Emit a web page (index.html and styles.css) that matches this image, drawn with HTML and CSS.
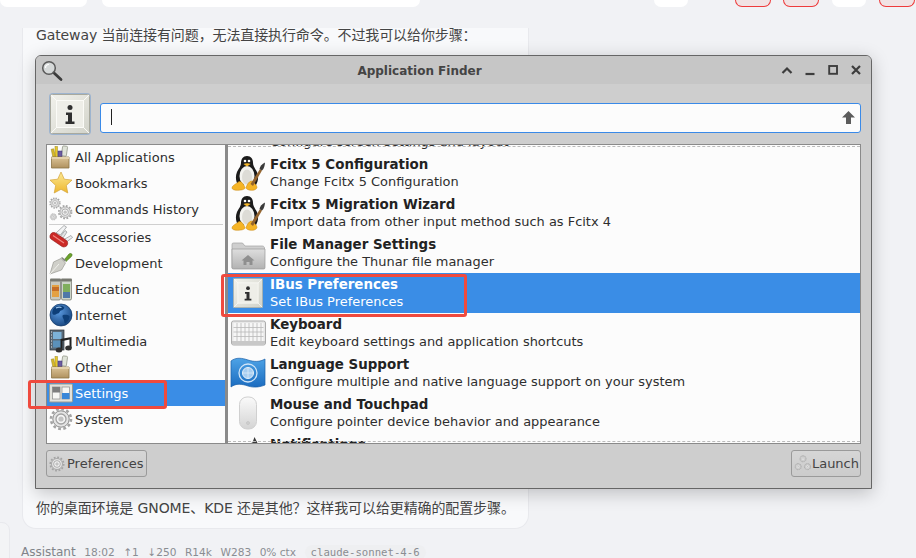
FILE: index.html
```html
<!DOCTYPE html>
<html lang="zh">
<head>
<meta charset="utf-8">
<title>Application Finder</title>
<link rel="stylesheet" href="styles.css">
</head>
<body>
<svg class="defs" width="0" height="0" aria-hidden="true">
  <defs>
    <linearGradient id="gBox" x1="0" y1="0" x2="0" y2="1"><stop offset="0" stop-color="#dcc498"/><stop offset="1" stop-color="#b0925f"/></linearGradient>
    <linearGradient id="gStar" x1="0" y1="0" x2="0" y2="1"><stop offset="0" stop-color="#fce994"/><stop offset="1" stop-color="#eeb72e"/></linearGradient>
    <linearGradient id="gTile" x1="0" y1="0" x2="1" y2="1"><stop offset="0" stop-color="#f2f2ec"/><stop offset="1" stop-color="#d2d3ca"/></linearGradient>
    <linearGradient id="gFolder" x1="0" y1="0" x2="0" y2="1"><stop offset="0" stop-color="#dedede"/><stop offset="1" stop-color="#b2b2b2"/></linearGradient>
    <linearGradient id="gFlag" x1="0" y1="0" x2="0" y2="1"><stop offset="0" stop-color="#4ea3e6"/><stop offset="1" stop-color="#1b6cc0"/></linearGradient>
    <linearGradient id="gMouse" x1="0" y1="0" x2="0" y2="1"><stop offset="0" stop-color="#fafafa"/><stop offset="1" stop-color="#d4d4d4"/></linearGradient>
    <radialGradient id="gGlobe" cx=".4" cy=".35" r=".75"><stop offset="0" stop-color="#5a9ae0"/><stop offset="1" stop-color="#123f78"/></radialGradient>
    <symbol id="i-tile" viewBox="0 0 40 40">
      <rect x=".5" y=".5" width="39" height="39" rx="2" fill="url(#gTile)" stroke="#a8a99e"/>
      <path d="M1 1l6 6M39 1l-6 6M1 39l6-6M39 39l-6-6" stroke="#fafaf6" stroke-width="1"/>
      <rect x="6.500" y="6.500" width="27" height="27" fill="#eeeee8" stroke="#fbfbf7"/>
      <circle cx="20" cy="13.500" r="2.500" fill="#2f2f2f"/>
      <path d="M16 18.500h6v9h2.500V30h-9v-2.500H18v-6.500h-2z" fill="#2f2f2f"/>
    </symbol>
    <symbol id="i-box" viewBox="0 0 24 24">
      <rect x="13" y="1" width="5" height="10" rx="1" fill="#dfe3d8" stroke="#8b8f80" stroke-width=".7" transform="rotate(8 15 6)"/>
      <rect x="6" y="1.500" width="2.500" height="11" fill="#e8c92c" stroke="#9a8520" stroke-width=".5"/>
      <rect x="3" y="4" width="2.500" height="8" fill="#d7b928" stroke="#9a8520" stroke-width=".5" transform="rotate(-12 4 8)"/>
      <rect x="9" y="6" width="4" height="6" fill="#6d5ca0" stroke="#3c3070" stroke-width=".5"/>
      <path d="M2.500 12h17.500v11H2.500z" fill="url(#gBox)" stroke="#8c7345" stroke-width=".8"/>
      <path d="M2.500 12h17.500v2H2.500z" fill="#e5d3ad"/>
    </symbol>
    <symbol id="i-star" viewBox="0 0 24 24">
      <path d="M12 1l3.300 7.200 7.700.9-5.700 5.300 1.500 7.600L12 18.300 5.200 22l1.500-7.600L1 9.100l7.700-.9z" fill="url(#gStar)" stroke="#d3a33a" stroke-width=".7" stroke-linejoin="round"/>
    </symbol>
    <symbol id="i-gear" viewBox="0 0 24 24">
      <circle cx="12" cy="12" r="8.200" fill="#e4e4e4" stroke="#8e8e8e" stroke-width="1"/>
      <circle cx="12" cy="12" r="10" fill="none" stroke="#a4a4a4" stroke-width="2.600" stroke-dasharray="2.800 2.430"/>
      <circle cx="12" cy="12" r="5" fill="#f5f5f5" stroke="#a2a2a2" stroke-width="1.300"/>
      <circle cx="12" cy="12" r="2.600" fill="#c2c2c2"/>
    </symbol>
    <symbol id="i-gears" viewBox="0 0 24 24">
      <g transform="scale(.5)"><use href="#i-gear" width="24" height="24"/></g>
      <g transform="translate(8.500 7.500) scale(.64)"><use href="#i-gear" width="24" height="24"/></g>
      <g transform="translate(.5 16) scale(.32)"><use href="#i-gear" width="24" height="24"/></g>
    </symbol>
    <symbol id="i-knife" viewBox="0 0 24 24">
      <path d="M7 8L15 .5l2.500 1.500-6 8z" fill="#f2f3f4" stroke="#8f9395" stroke-width=".7"/>
      <path d="M11 12l5-6.500 2 1.500-4 6z" fill="#e2e4e6" stroke="#8f9395" stroke-width=".7"/>
      <path d="M14 15l8-4.500 1.500 2-7.500 5.500z" fill="#eceef0" stroke="#8f9395" stroke-width=".7"/>
      <path d="M1.500 9.500c1-2 3-2.500 5-1.500l11 7.500c1.500 1.200 1.500 3.500.5 5-1 1.300-3.500 2-5 1l-11-7.500c-1.300-1-1.300-3-.5-4.500z" fill="#cc2a27" stroke="#8d1614" stroke-width=".6"/>
      <path d="M4 10.500l11 7.500" stroke="#f28a84" stroke-width="1.100" fill="none"/>
    </symbol>
    <symbol id="i-trowel" viewBox="0 0 24 24">
      <path d="M15.500 8.500l4.500-5.500c1-1 2.800-.5 3 .5.200 1-.2 1.500-.8 2.200L17 10.500z" fill="#6da32c" stroke="#42701a" stroke-width=".6"/>
      <path d="M13 8l-1-1 1-1 2 1.500 2 2-1 1-1-.5z" fill="#8a8a84"/>
      <path d="M1 23L4.500 11 12 7.500l4.500 4.500-4 7z" fill="#cfcfc9" stroke="#8d8d86" stroke-width=".6"/>
      <path d="M1 23l9-10" stroke="#f1f1ec" stroke-width="1"/>
    </symbol>
    <symbol id="i-jars" viewBox="0 0 24 24">
      <rect x="1.500" y="3" width="10" height="20" rx="1.500" fill="#c8c9bf" stroke="#6f7068" stroke-width=".7"/>
      <rect x="1" y="1.500" width="11" height="3" rx="1" fill="#777870"/>
      <rect x="3" y="8" width="7" height="12" fill="#e4a142"/>
      <rect x="3" y="10" width="7" height="4" fill="#c56d26"/>
      <rect x="12.500" y="3" width="10" height="20" rx="1.500" fill="#ccd4c8" stroke="#6f7068" stroke-width=".7"/>
      <rect x="12" y="1.500" width="11" height="3" rx="1" fill="#777870"/>
      <rect x="14" y="7" width="7" height="8" fill="#7fae5c"/>
      <rect x="14" y="15" width="7" height="6" fill="#4f79a8"/>
    </symbol>
    <symbol id="i-globe" viewBox="0 0 24 24">
      <circle cx="12" cy="12" r="11" fill="url(#gGlobe)" stroke="#0f3564" stroke-width=".7"/>
      <path d="M6 4c3-1.500 7-1.800 9 0 1 1-1 3-3 3.500-1.500.4-1.200 2.500-3 3-2 .4-3 2-5 1C2.500 10 3.500 6 6 4zM14 12c2-.5 5-.5 6.500 1 .5 2-1.500 6-4 7.500-1.500 0-1-3-2-4.500-.8-1.500-1.500-3.500-.5-4z" fill="#0e3f78"/>
      <path d="M7 5c2-1 4-1 5.500-.5" stroke="#9cc6f0" stroke-width="1.200" fill="none"/>
    </symbol>
    <symbol id="i-media" viewBox="0 0 24 24">
      <rect x="1" y="1" width="14" height="20" fill="#5a6a78" stroke="#2b2f33" stroke-width=".7"/>
      <rect x="4" y="3" width="8.500" height="7" fill="#7cb2d8"/>
      <rect x="4" y="11.500" width="8.500" height="7" fill="#5b91ba"/>
      <path d="M2 3h1M2 6h1M2 9h1M2 12h1M2 15h1M2 18h1" stroke="#e6e6e6" stroke-width="1.100"/>
      <path d="M11.500 10l11-2v11l-2 .5V10.500l-7 1.400V21h-2z" fill="#222"/>
      <ellipse cx="10" cy="21" rx="3.300" ry="2.500" fill="#303030"/>
      <ellipse cx="19.500" cy="19" rx="3.300" ry="2.500" fill="#303030"/>
    </symbol>
    <symbol id="i-settings" viewBox="0 0 24 24">
      <rect x=".5" y="3" width="23" height="18" rx="1" fill="#e2e2dc" stroke="#9a9a92"/>
      <rect x="3.500" y="6" width="7.500" height="12" fill="#f7f7f4" stroke="#8a8a8a" stroke-width=".7"/>
      <rect x="3.500" y="6" width="7.500" height="5.500" fill="#7d7d7d"/>
      <rect x="13" y="6" width="7.500" height="12" fill="#f7f7f4" stroke="#8a8a8a" stroke-width=".7"/>
      <rect x="13" y="12" width="7.500" height="6" fill="#3a87d8"/>
    </symbol>
    <symbol id="i-mag" viewBox="0 0 22 22">
      <path d="M12.500 12.500L20 19.500" stroke="#3c3c3c" stroke-width="2.800" stroke-linecap="round"/>
      <circle cx="8" cy="8" r="6.300" fill="#dfe3e3" fill-opacity=".65" stroke="#5a5a5a" stroke-width="1.500"/>
      <path d="M4.500 8a3.500 3.500 0 0 1 3.500-3.500" fill="none" stroke="#fff" stroke-width="1.200"/>
    </symbol>
    <symbol id="i-tux" viewBox="0 0 36 36">
      <path d="M17 1c4 0 6 3 6 7 0 3 2 5 4 9 2 5 1 10-1 13H8c-2-3-3-8-1-13 2-4 4-6 4-9 0-4 2-7 6-7z" fill="#1b1b1b"/>
      <ellipse cx="17" cy="21" rx="7.500" ry="10" fill="#f3f3ef"/>
      <ellipse cx="17" cy="22" rx="5" ry="7.500" fill="#dddcd6"/>
      <circle cx="15" cy="6" r="1.300" fill="#fff"/><circle cx="19" cy="6" r="1.300" fill="#fff"/>
      <path d="M13.500 9c2-1 5-1 7 0l-3.500 2.500z" fill="#f3b52a"/>
      <path d="M2 33c0-2.500 4-4 7-6.500 3-.5 5 3.500 6 6 .5 2-4 2.800-7.500 2.800C4.500 35.300 2 34.500 2 33zM27 32.500c0-2-2.500-5-5.500-6.500-3 .5-4.500 4-5.500 6.500 0 2 3.500 2.800 6 2.800 2.500 0 4.500-1 5-2.800z" fill="#f5b426" stroke="#c68612" stroke-width=".5"/>
      <path d="M20.500 29L30 14l2 1.500L23 31z" fill="#94642e"/>
      <path d="M29.500 14c.5-3 2.500-5 5.500-6.500-.2 3-1 6.500-3 8z" fill="#3a3a3a"/>
    </symbol>
    <symbol id="i-folder" viewBox="0 0 36 36">
      <path d="M2 33V9.500C2 8.500 2.500 8 3.500 8h9l2.500 3h17.500c1 0 2 1 2 2v20z" fill="#cfcfcf" stroke="#a0a0a0" stroke-width=".7"/>
      <path d="M2 14h33v18.500c0 1-.5 1.500-1.500 1.500h-30C2.500 34 2 33.500 2 32.500z" fill="url(#gFolder)" stroke="#9a9a9a" stroke-width=".7"/>
      <path d="M18 20l-6.500 5.500h2V30h3v-3h3v3h3v-4.500h2z" fill="#8f8f8f"/>
    </symbol>
    <symbol id="i-keys" viewBox="0 0 36 36">
      <rect x="1.500" y="6" width="34" height="24" rx="2" fill="#e7e7e7" stroke="#ababab"/>
      <rect x="3.500" y="8" width="30" height="18" fill="#f6f6f6"/>
      <path d="M3.500 12.500h30M3.500 17h30M3.500 21.500h30M7 8v18M11 8v18M15 8v18M19 8v18M23 8v18M27 8v18M31 8v18" stroke="#b9b9b9" stroke-width=".8"/>
      <rect x="2" y="26" width="33" height="3.500" fill="#c8c8c8"/>
    </symbol>
    <symbol id="i-flag" viewBox="0 0 36 36">
      <path d="M1 6c5-4 11-3 17-1 6 2 12 2 17-1v26c-5 2-11 3-17 1-6-2-12-3-17 1z" fill="url(#gFlag)" stroke="#1a5fa8" stroke-width=".7"/>
      <circle cx="18" cy="18" r="9" fill="none" stroke="#cfe4f7" stroke-width="1.300"/>
      <circle cx="18" cy="18" r="5.500" fill="#a7cdf0" stroke="#e4f0fa" stroke-width="1"/>
      <path d="M18 12.500v11M12.500 18h11" stroke="#e4f0fa" stroke-width=".7"/>
    </symbol>
    <symbol id="i-mouse" viewBox="0 0 36 36">
      <rect x="9.500" y="2" width="17" height="32" rx="7.500" fill="url(#gMouse)" stroke="#d0d0d0"/>
      <circle cx="18" cy="28" r="1.500" fill="#d0d0d0" stroke="#b8b8b8" stroke-width=".5"/>
    </symbol>
    <symbol id="i-display" viewBox="0 0 36 36">
      <rect x="2" y="-6" width="32" height="22" fill="#d8d8d8" stroke="#a8a8a8"/>
      <path d="M14 16h8l1 5h3v2H10v-2h3z" fill="#d2d2d2" stroke="#b0b0b0" stroke-width=".7"/>
    </symbol>
    <symbol id="i-bell" viewBox="0 0 36 36">
      <path d="M24.500 2l3 6 6 1.500-4 4-9-.5-4-3.500 6-2z" fill="#3a3a3a"/>
    </symbol>
    <symbol id="i-launch" viewBox="0 0 24 24">
      <g transform="translate(7 0) scale(.42)"><use href="#i-gear" width="24" height="24"/></g>
      <g transform="translate(.5 10.500) scale(.42)"><use href="#i-gear" width="24" height="24"/></g>
      <g transform="translate(13 10.500) scale(.42)"><use href="#i-gear" width="24" height="24"/></g>
    </symbol>
  </defs>
</svg>

<div class="topbar">
  <span class="pill pill-a"></span>
  <span class="pill pill-b"></span>
  <span class="pill pill-c"></span>
  <span class="pill pill-red pill-d"></span>
  <span class="pill pill-red pill-e"></span>
  <span class="pill pill-f"></span>
  <span class="pill pill-red pill-g"></span>
</div>

<main class="message">
  <p class="line line-top">Gateway 当前连接有问题，无法直接执行命令。不过我可以给你步骤：</p>

  <section class="window">
    <header class="titlebar">
      <svg class="mag"><use href="#i-mag"/></svg>
      <span class="title">Application Finder</span>
      <span class="wm">
        <svg viewBox="0 0 12 12"><path d="M1.500 9L6 4.500 10.500 9" fill="none" stroke="#3d3d3d" stroke-width="2.200"/></svg>
        <svg viewBox="0 0 12 12"><path d="M1.500 10h9" stroke="#3d3d3d" stroke-width="2.200"/></svg>
        <svg viewBox="0 0 12 12"><rect x="2.200" y="2" width="7.800" height="7.800" fill="none" stroke="#3d3d3d" stroke-width="1.900"/></svg>
        <svg viewBox="0 0 12 12"><path d="M2 2l8 8M10 2l-8 8" stroke="#3d3d3d" stroke-width="2.200"/></svg>
      </span>
    </header>

    <div class="content">
      <div class="searchrow">
        <span class="bigtile"><svg><use href="#i-tile"/></svg></span>
        <div class="entry">
          <span class="caret"></span>
          <svg class="uparrow" viewBox="0 0 13 13"><path d="M6.500 0L13 6.500H9V13H4V6.500H0z" fill="#5c5c5c"/></svg>
        </div>
      </div>

      <div class="panes">
        <ul class="cats">
          <li class="cat"><svg><use href="#i-box"/></svg>All Applications</li>
          <li class="cat"><svg><use href="#i-star"/></svg>Bookmarks</li>
          <li class="cat"><svg><use href="#i-gears"/></svg>Commands History</li>
          <li class="cat-sep"></li>
          <li class="cat"><svg><use href="#i-knife"/></svg>Accessories</li>
          <li class="cat"><svg><use href="#i-trowel"/></svg>Development</li>
          <li class="cat"><svg><use href="#i-jars"/></svg>Education</li>
          <li class="cat"><svg><use href="#i-globe"/></svg>Internet</li>
          <li class="cat"><svg><use href="#i-media"/></svg>Multimedia</li>
          <li class="cat"><svg><use href="#i-box"/></svg>Other</li>
          <li class="cat is-selected"><svg><use href="#i-settings"/></svg>Settings</li>
          <li class="cat"><svg><use href="#i-gear"/></svg>System</li>
        </ul>

        <div class="apps">
          <div class="apps-scroll">
            <div class="app"><svg class="app-icon"><use href="#i-display"/></svg><div><b>Display</b><span>Configure screen settings and layout</span></div></div>
            <div class="app"><svg class="app-icon"><use href="#i-tux"/></svg><div><b>Fcitx 5 Configuration</b><span>Change Fcitx 5 Configuration</span></div></div>
            <div class="app"><svg class="app-icon"><use href="#i-tux"/></svg><div><b>Fcitx 5 Migration Wizard</b><span>Import data from other input method such as Fcitx 4</span></div></div>
            <div class="app"><svg class="app-icon"><use href="#i-folder"/></svg><div><b>File Manager Settings</b><span>Configure the Thunar file manager</span></div></div>
            <div class="app is-selected"><svg class="app-icon app-icon-tile"><use href="#i-tile"/></svg><div><b>IBus Preferences</b><span>Set IBus Preferences</span></div></div>
            <div class="app"><svg class="app-icon"><use href="#i-keys"/></svg><div><b>Keyboard</b><span>Edit keyboard settings and application shortcuts</span></div></div>
            <div class="app"><svg class="app-icon"><use href="#i-flag"/></svg><div><b>Language Support</b><span>Configure multiple and native language support on your system</span></div></div>
            <div class="app"><svg class="app-icon"><use href="#i-mouse"/></svg><div><b>Mouse and Touchpad</b><span>Configure pointer device behavior and appearance</span></div></div>
            <div class="app"><svg class="app-icon"><use href="#i-bell"/></svg><div><b>Notifications</b><span>Customize how notifications appear</span></div></div>
          </div>
          <span class="dash dash-top"></span>
          <span class="dash dash-bottom"></span>
        </div>
      </div>

      <div class="actions">
        <button class="btn btn-pref"><svg><use href="#i-gear"/></svg>Preferences</button>
        <button class="btn btn-launch"><svg><use href="#i-launch"/></svg>Launch</button>
      </div>
    </div>

    <span class="mark mark-settings"></span>
    <span class="mark mark-ibus"></span>
  </section>

  <p class="line line-bottom">你的桌面环境是 GNOME、KDE 还是其他？这样我可以给更精确的配置步骤。</p>
</main>

<footer class="meta">
  <span class="who">Assistant</span>
  <span class="time">18:02</span>
  <span>↑1</span>
  <span>↓250</span>
  <span>R14k</span>
  <span>W283</span>
  <span>0% ctx</span>
  <span class="model">claude-sonnet-4-6</span>
</footer>
<span class="edge"></span>
</body>
</html>
```

FILE: styles.css
```css
* { box-sizing: border-box; }
html, body { margin: 0; padding: 0; }
body {
  position: relative;
  width: 916px;
  height: 558px;
  overflow: hidden;
  background: #f1f2f5;
  font-family: "DejaVu Sans", "Noto Sans CJK SC", sans-serif;
  color: #2e2e2e;
}
.defs { position: absolute; }

.topbar { display: flex; height: 7px; }
.pill {
  display: block;
  height: 7px;
  background: #fff;
  border-radius: 0 0 9px 9px;
  flex: none;
}
.pill-a { width: 87px; margin-right: 15px; }
.pill-b { width: 318px; margin-right: 234px; }
.pill-c { width: 34px; margin-right: 47px; }
.pill-d { width: 36px; margin-right: 12px; }
.pill-e { width: 36px; margin-right: 13px; }
.pill-f { width: 34px; margin-right: 13px; }
.pill-g { width: 36px; }
.pill-red { background: #f1e3e4; border: 1px solid #ee3b3b; border-top: 0; }

.message {
  width: 507px;
  height: 501px;
  margin: 21px 0 0 22px;
  padding: 0 13px;
  background: #f8f9fb;
  border: 1px solid #e8e9ed;
  border-top: 0;
  border-radius: 0 0 14px 14px;
}
.line {
  margin: 0;
  font-size: 14px;
  line-height: 20px;
  color: #444;
  white-space: nowrap;
  letter-spacing: -.11px;
}
.line-top { height: 27px; line-height: 14px; }
.line-bottom { margin-top: 9px; }

.window {
  position: relative;
  width: 837px;
  height: 434px;
  margin-left: -1px;
  background: #cecece;
  border: 1px solid #666;
  border-radius: 6px 6px 0 0;
  box-shadow: 0 4px 18px rgba(0, 0, 0, .22);
}
.titlebar {
  position: relative;
  display: flex;
  align-items: center;
  justify-content: center;
  height: 28px;
  padding-top: 2px;
  background: #c6c6c6;
  border-radius: 5px 5px 0 0;
}
.mag { position: absolute; left: 5px; top: 4px; width: 22px; height: 22px; }
.title { font-size: 12px; font-weight: 700; color: #444; margin-right: 68px; }
.wm {
  position: absolute;
  right: 9px;
  top: 8px;
  display: flex;
  gap: 11px;
}
.wm svg { width: 12px; height: 12px; display: block; }

.content { padding: 10px 10px 0; }
.searchrow { display: flex; align-items: flex-start; height: 50px; padding: 0 0 0 4px; }
.bigtile {
  display: block;
  width: 40px;
  height: 40px;
  margin-right: 10px;
  border-radius: 3px;
  box-shadow: 0 0 0 1px #9db4cf;
}
.bigtile svg { width: 40px; height: 40px; display: block; }
.entry {
  position: relative;
  flex: 1;
  height: 30px;
  margin-top: 9px;
  background: #fcfcfc;
  border: 1px solid #3a8ae8;
  border-radius: 3px;
}
.caret { position: absolute; left: 10px; top: 5px; width: 1px; height: 16px; background: #222; }
.uparrow { position: absolute; right: 5px; top: 7px; width: 13px; height: 13px; }

.panes { display: flex; height: 300px; }
.cats {
  width: 179px;
  margin: 0;
  padding: 0;
  list-style: none;
  background: #fcfcfc;
  border: 1px solid #8a8a8a;
  border-right: 0;
  flex: none;
}
.cat {
  display: flex;
  align-items: center;
  height: 26px;
  font-size: 13px;
  color: #2e2e2e;
  white-space: nowrap;
}
.cat:first-child { margin-top: -1px; }
.cat svg { width: 24px; height: 24px; margin: 0 2px 0 2px; flex: none; }
.cat.is-selected { background: #3a8de6; color: #fff; }
.cat-sep { height: 1px; margin: 2px 2px -1px 2px; background: #cfcfcf; }

.apps {
  position: relative;
  flex: 1;
  overflow: hidden;
  background: #fcfcfc;
  border: 1px solid #8a8a8a;
  border-left: 3px solid #8a8a8a;
}
.apps-scroll { margin-top: -32px; }
.app {
  display: flex;
  align-items: center;
  height: 40px;
  color: #2e2e2e;
  white-space: nowrap;
}
.app-icon { display: block; width: 36px; height: 36px; margin: 0 4px 0 2px; flex: none; }
.app-icon-tile { width: 30px; height: 30px; margin: 0 7px 0 5px; }
.app div { display: flex; flex-direction: column; padding-bottom: 1px; }
.app b { font-size: 13.400px; line-height: 17px; font-weight: 700; color: #222; }
.app div span { display: block; font-size: 12.950px; line-height: 17px; }
.app.is-selected { background: #3a8de6; }
.app.is-selected b, .app.is-selected div span { color: #fff; }
.dash { position: absolute; left: 0; right: 0; height: 1px; border-top: 1px dashed #bbb; }
.dash-top { top: 1px; }
.dash-bottom { bottom: 1px; }

.actions { display: flex; justify-content: space-between; padding-top: 6px; }
.btn {
  display: flex;
  align-items: center;
  height: 27px;
  padding: 0 1px 0 2px;
  font-family: inherit;
  font-size: 13px;
  color: #444;
  background: linear-gradient(#d6d6d6, #cbcbcb);
  border: 1px solid #9a9a9a;
  border-radius: 3px;
}
.btn svg { width: 16px; height: 16px; margin-right: 2px; flex: none; }
.btn-pref { padding-right: 3px; }
.btn-launch svg { width: 18px; height: 18px; margin-right: 0; }

.mark {
  position: absolute;
  border: 3px solid #ef4a3e;
  border-radius: 3px;
  pointer-events: none;
}
.mark-settings { left: -8px; top: 324px; width: 139px; height: 29px; }
.mark-ibus { left: 185px; top: 218px; width: 246px; height: 43px; }

.meta {
  display: flex;
  align-items: center;
  gap: 8.500px;
  height: 14px;
  margin: 16px 0 0 21px;
  font-size: 10.600px;
  color: #8a8d92;
  white-space: nowrap;
}
.who { font-size: 12px; color: #80848a; }
.model {
  font-family: "DejaVu Sans Mono", monospace;
  font-size: 10.670px;
  padding: 1px 6px;
  background: #eeeff1;
  border-radius: 8px;
}
.edge {
  position: absolute;
  left: -12px;
  top: 522px;
  width: 22px;
  height: 60px;
  background: #f3f4f6;
  border: 1px solid #e8e9ed;
  border-radius: 8px;
}
```
